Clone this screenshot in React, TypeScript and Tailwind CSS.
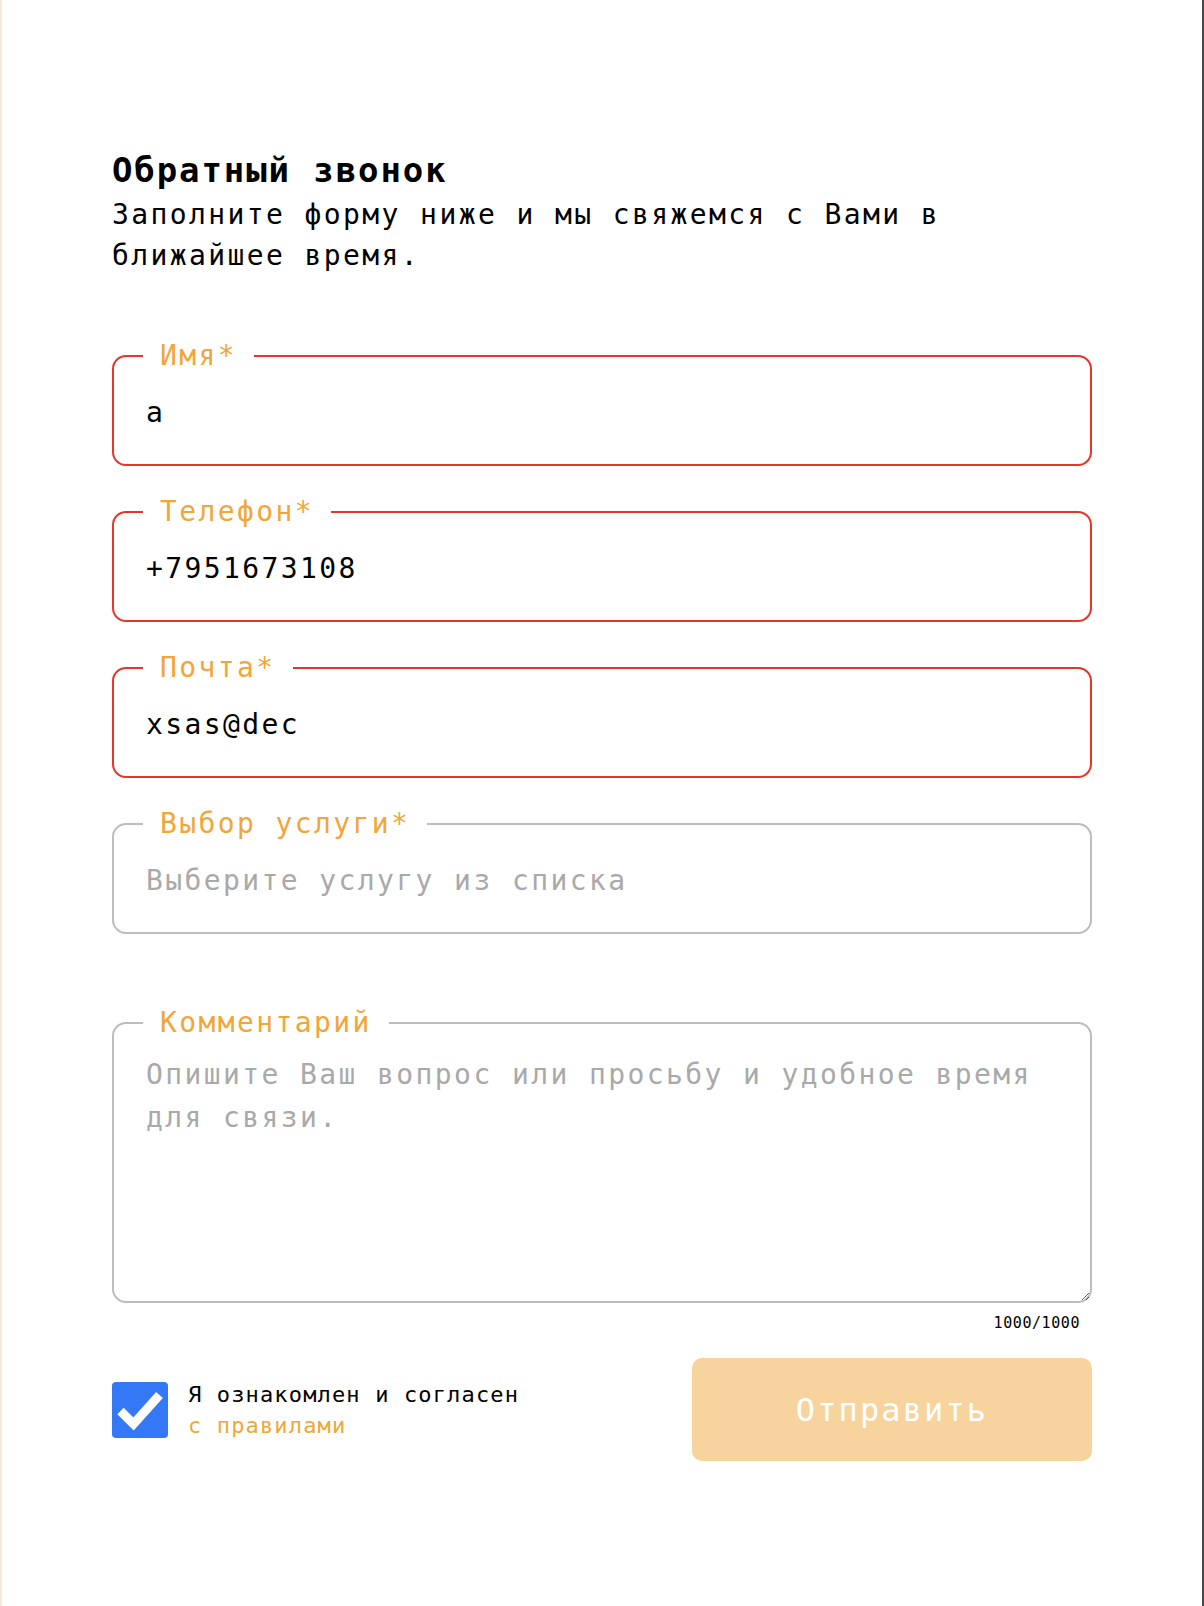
import React from "react";

const mono = { fontFamily: '"DejaVu Sans Mono", "Liberation Mono", monospace' };

function Field({
  label,
  value,
  placeholder,
  error,
}: {
  label: string;
  value?: string;
  placeholder?: string;
  error?: boolean;
}) {
  return (
    <fieldset
      className={`m-0 min-w-0 rounded-[14px] border-2 p-0 pb-[12px] ${
        error ? "border-[#e8352a]" : "border-[#bdbdbd]"
      }`}
    >
      <legend className="ml-[29px] px-[17px] text-[28px] leading-[32px] tracking-[2.4px] text-[#f2a639]">
        {label}
      </legend>
      <input
        readOnly
        value={value ?? ""}
        placeholder={placeholder}
        className="block h-[80px] w-full bg-transparent px-[32px] text-[28px] tracking-[2.4px] text-black outline-none placeholder:text-[#a9a9a9]"
        style={mono}
      />
    </fieldset>
  );
}

export default function App() {
  return (
    <div className="flex min-h-screen w-full bg-white" style={mono}>
      <div className="w-[2px] shrink-0 bg-[#f6e9d6]" />
      <main className="flex-1 pl-[110px] pr-[110px] pt-[150px]">
        <h1 className="text-[34px] font-bold leading-[40px] tracking-[1.9px] text-black">
          Обратный звонок
        </h1>
        <p className="mt-[4px] max-w-[870px] text-[28px] leading-[41px] tracking-[2.4px] text-black">
          Заполните форму ниже и мы свяжемся с Вами в ближайшее время.
        </p>

        <div className="mt-[64px] flex flex-col gap-[30px]">
          <Field label="Имя*" value="a" error />
          <Field label="Телефон*" value="+7951673108" error />
          <Field label="Почта*" value="xsas@dec" error />
          <Field label="Выбор услуги*" placeholder="Выберите услугу из списка" />
        </div>

        <fieldset className="m-0 mt-[73px] min-w-0 rounded-[14px] border-2 border-[#bdbdbd] p-0">
          <legend className="ml-[29px] px-[17px] text-[28px] leading-[32px] tracking-[2.4px] text-[#f2a639]">
            Комментарий
          </legend>
          <textarea
            readOnly
            placeholder="Опишите Ваш вопрос или просьбу и удобное время для связи."
            className="block h-[262px] w-full rounded-b-[12px] bg-transparent px-[32px] pt-[14px] text-[28px] leading-[43px] tracking-[2.4px] text-black outline-none placeholder:text-[#a9a9a9]"
            style={mono}
          />
        </fieldset>
        <div className="mt-[10px] pr-[12px] text-right text-[15px] leading-[20px] tracking-[0.57px] text-black">
          1000/1000
        </div>

        <div className="mt-[25px] flex items-center justify-between">
          <div className="flex items-center gap-[20px]">
            <div className="flex h-[56px] w-[56px] items-center justify-center rounded-[4px] bg-[#3478f6]">
              <svg width="56" height="56" viewBox="0 0 56 56">
                <path
                  d="M8.5 29 L21.5 42 L47.5 13"
                  fill="none"
                  stroke="white"
                  strokeWidth="9"
                  strokeLinejoin="miter"
                />
              </svg>
            </div>
            <div className="text-[22px] leading-[31px] tracking-[1.15px]">
              <div className="text-black">Я ознакомлен и согласен</div>
              <div className="text-[#f2a639]">с правилами</div>
            </div>
          </div>
          <button className="flex h-[103px] w-[400px] items-center justify-center rounded-[10px] bg-[#f7d49d] text-[32px] tracking-[2.1px] text-white">
            Отправить
          </button>
        </div>
      </main>
      <div className="w-[2px] shrink-0 bg-[#4a4a4c]" />
    </div>
  );
}
